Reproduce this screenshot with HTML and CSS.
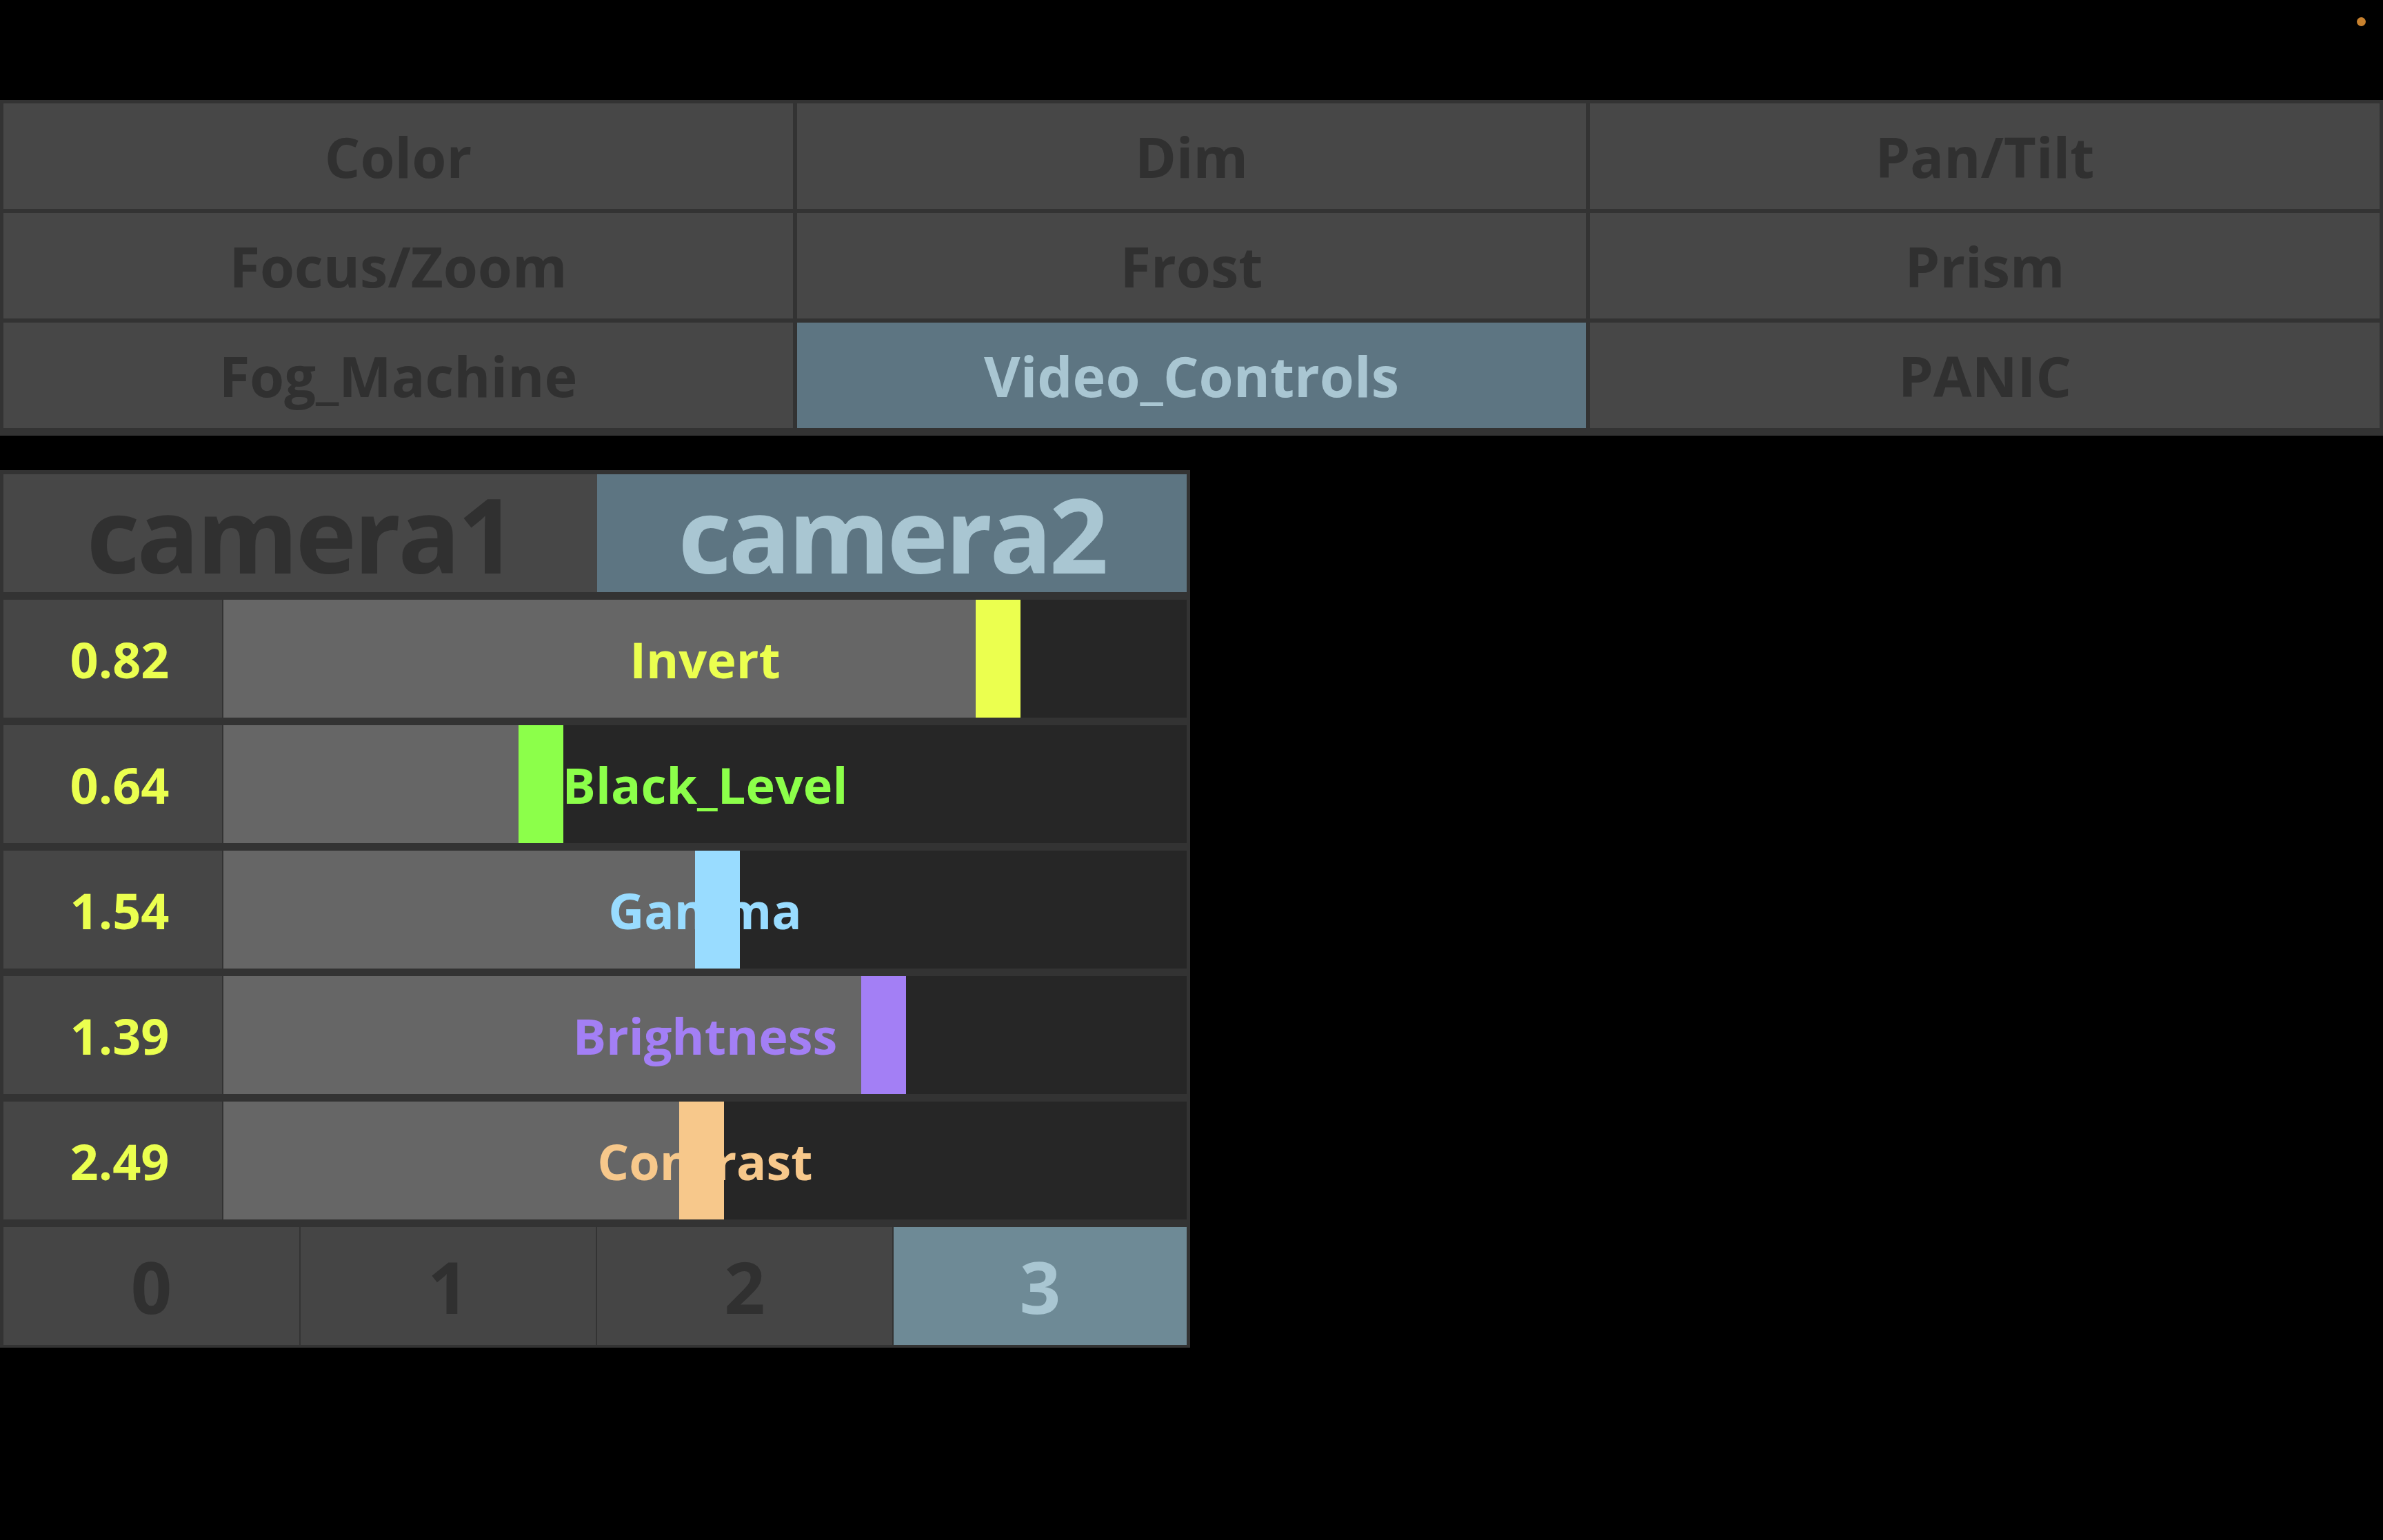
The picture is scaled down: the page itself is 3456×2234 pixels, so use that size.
FILE: index.html
```html
<!DOCTYPE html>
<html>
<head>
<meta charset="utf-8">
<link rel="stylesheet" href="styles.css">
</head>
<body>
<div class="topbar"><span class="dot"></span></div>
<div class="menu">
  <div class="cell">Color</div>
  <div class="cell">Dim</div>
  <div class="cell">Pan/Tilt</div>
  <div class="cell">Focus/Zoom</div>
  <div class="cell">Frost</div>
  <div class="cell">Prism</div>
  <div class="cell">Fog_Machine</div>
  <div class="cell active">Video_Controls</div>
  <div class="cell">PANIC</div>
</div>
<div class="spacer"></div>
<div class="panel">
  <div class="cams">
    <div class="cam">camera1</div>
    <div class="cam active">camera2</div>
  </div>
  <div class="row">
    <div class="val">0.82</div>
    <div class="track">
      <div class="fill" style="width:1091px"></div>
      <div class="knob k-yellow"></div>
      <div class="rest"></div>
      <div class="label c-yellow">Invert</div>
    </div>
  </div>
  <div class="row">
    <div class="val">0.64</div>
    <div class="track">
      <div class="fill" style="width:428px"></div>
      <div class="knob k-green"></div>
      <div class="rest"></div>
      <div class="label c-green">Black_Level</div>
    </div>
  </div>
  <div class="row">
    <div class="val">1.54</div>
    <div class="track">
      <div class="fill" style="width:684px"></div>
      <div class="knob k-blue"></div>
      <div class="rest"></div>
      <div class="label c-blue">Gamma</div>
    </div>
  </div>
  <div class="row">
    <div class="val">1.39</div>
    <div class="track">
      <div class="fill" style="width:925px"></div>
      <div class="knob k-purple"></div>
      <div class="rest"></div>
      <div class="label c-purple">Brightness</div>
    </div>
  </div>
  <div class="row">
    <div class="val">2.49</div>
    <div class="track">
      <div class="fill" style="width:661px"></div>
      <div class="knob k-orange"></div>
      <div class="rest"></div>
      <div class="label c-orange">Contrast</div>
    </div>
  </div>
  <div class="pages">
    <div class="page">0</div>
    <div class="page">1</div>
    <div class="page">2</div>
    <div class="page active">3</div>
  </div>
</div>
</body>
</html>
```
FILE: styles.css
```css
html, body {
  margin: 0;
  padding: 0;
  background: #000;
  width: 3456px;
  height: 2234px;
  overflow: hidden;
  font-family: "Open Sans", "Noto Sans", sans-serif;
  font-weight: 700;
}
.topbar {
  height: 145px;
  position: relative;
}
.dot {
  position: absolute;
  left: 3418px;
  top: 25px;
  width: 13px;
  height: 13px;
  border-radius: 50%;
  background: #c7812e;
}
.menu {
  background: #333333;
  padding: 5px 5px 11px 5px;
  display: grid;
  grid-template-columns: 1145px 1144px 1145px;
  grid-template-rows: 153px 153px 153px;
  column-gap: 6px;
  row-gap: 6px;
}
.cell {
  background: #474747;
  color: #303030;
  font-size: 81px;
  display: flex;
  align-items: center;
  justify-content: center;
  line-height: 1;
}
.cell.active, .cam.active {
  background: #5d7582;
  color: #a9c6d2;
}
.spacer {
  height: 50px;
}
.panel {
  width: 1716px;
  background: #333333;
  padding: 6px 5px 4px 5px;
  display: flex;
  flex-direction: column;
  gap: 11px;
}
.cams {
  height: 171px;
  display: grid;
  grid-template-columns: 861px 1fr;
}
.cam {
  background: #474747;
  color: #303030;
  font-size: 150px;
  display: flex;
  align-items: center;
  justify-content: center;
  line-height: 1;
  letter-spacing: -4px;
}
.row {
  height: 171px;
  display: grid;
  grid-template-columns: 317px 1fr;
  column-gap: 2px;
}
.val {
  background: #464646;
  color: #ebff4f;
  font-size: 72px;
  display: flex;
  align-items: center;
  justify-content: center;
  padding-left: 20px;
}
.track {
  position: relative;
  display: flex;
  background: #262626;
}
.fill {
  background: #666666;
}
.knob {
  width: 65px;
  position: relative;
  z-index: 2;
}
.rest {
  flex: 1;
  background: #262626;
}
.label {
  position: absolute;
  inset: 0;
  z-index: 1;
  display: flex;
  align-items: center;
  justify-content: center;
  font-size: 72px;
  line-height: 1;
}
.k-yellow { background: #ebff4f; }
.k-green { background: #8cff4a; }
.k-blue { background: #99dcff; }
.k-purple { background: #a37ff5; }
.k-orange { background: #f7c88b; }
.c-yellow { color: #ebff4f; }
.c-green { color: #8cff4a; }
.c-blue { color: #99dcff; }
.c-purple { color: #a37ff5; }
.c-orange { color: #f7c88b; }
.pages {
  height: 171px;
  display: grid;
  grid-template-columns: 429px 428px 428px 1fr;
  column-gap: 2px;
}
.page {
  background: #454545;
  color: #303030;
  font-size: 104px;
  display: flex;
  align-items: center;
  justify-content: center;
  line-height: 1;
}
.page.active {
  background: #6e8a96;
  color: #a9c6d2;
}
```
